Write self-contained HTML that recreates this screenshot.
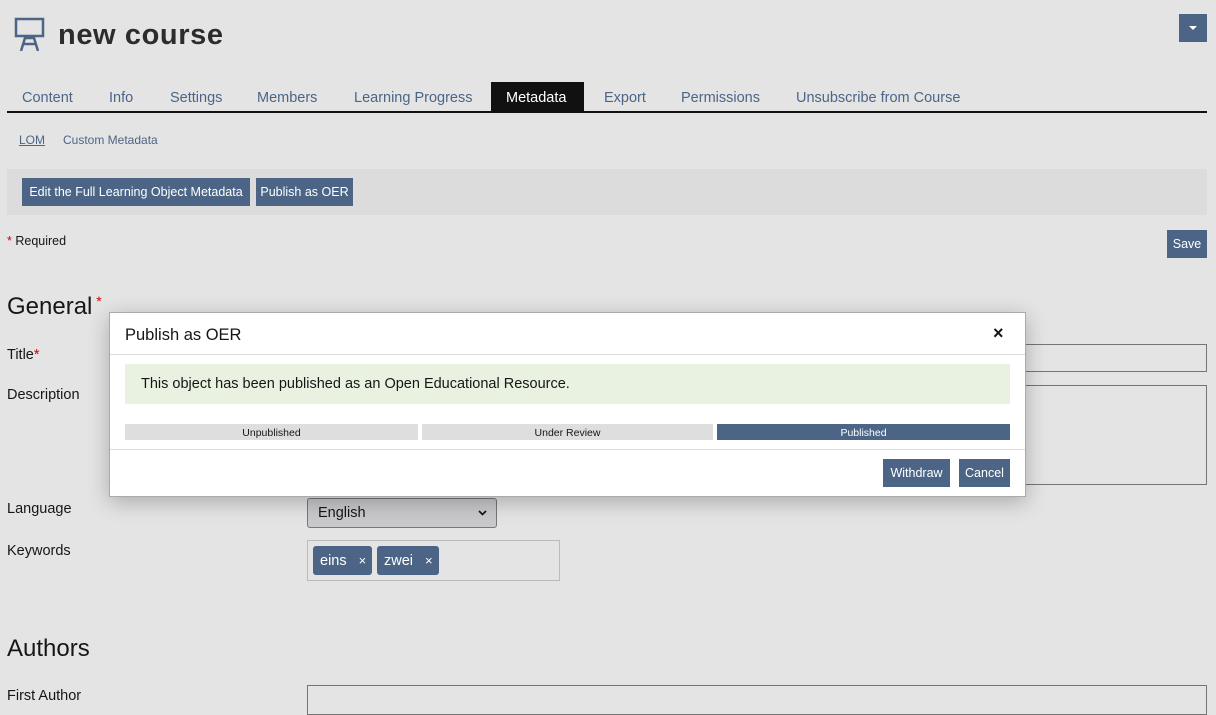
<!DOCTYPE html>
<html><head><meta charset="utf-8"><style>
*{box-sizing:border-box;margin:0;padding:0}
body{width:1216px;height:704px;overflow:hidden;background:#e4e4e4;font-family:"Liberation Sans",sans-serif;color:#161616;position:relative}
.a{position:absolute}
.btn{position:absolute;background:#4c6586;color:#fff;font-size:12.5px;display:flex;align-items:center;justify-content:center}
.tab{position:absolute;top:82px;height:29px;line-height:33px;font-size:14.5px;color:#4c6586;padding:0 15px}
.lbl{position:absolute;left:7px;font-size:14.5px;color:#161616}
.inp{position:absolute;border:1px solid #757575;background:#e4e4e4}
</style></head><body>
<svg class="a" style="left:14px;top:17px" width="32" height="34" viewBox="0 0 32 34" fill="none" stroke="#4c6586" stroke-width="2.5"><rect x="2" y="2" width="27" height="17"/><path d="M7 34 L11 21 L20 21 L24 34 M9 27 H22"/></svg>
<div class="a" style="left:58px;top:19px;font-size:29px;font-weight:bold;color:#2c2c2c;letter-spacing:0.6px">new course</div>
<div class="btn" style="left:1179px;top:14px;width:28px;height:28px"><svg width="10" height="6"><path d="M1 1h8l-4 4z" fill="#fff"/></svg></div>
<div class="tab" style="left:7px">Content</div>
<div class="tab" style="left:94px">Info</div>
<div class="tab" style="left:155px">Settings</div>
<div class="tab" style="left:242px">Members</div>
<div class="tab" style="left:339px">Learning Progress</div>
<div class="tab" style="left:491px;width:93px;background:#111;color:#fff">Metadata</div>
<div class="tab" style="left:589px">Export</div>
<div class="tab" style="left:666px">Permissions</div>
<div class="tab" style="left:781px">Unsubscribe from Course</div>
<div class="a" style="left:7px;top:111px;width:1200px;height:2px;background:#111"></div>
<div class="a" style="left:19px;top:133px;font-size:12px;color:#4c6586;text-decoration:underline">LOM</div>
<div class="a" style="left:63px;top:133px;font-size:12px;color:#4c6586">Custom Metadata</div>
<div class="a" style="left:7px;top:169px;width:1200px;height:46px;background:#dcdcdc"></div>
<div class="btn" style="left:22px;top:178px;width:228px;height:28px">Edit the Full Learning Object Metadata</div>
<div class="btn" style="left:256px;top:178px;width:97px;height:28px">Publish as OER</div>
<div class="a" style="left:7px;top:234px;font-size:12.5px"><span style="color:#c00">*</span> Required</div>
<div class="btn" style="left:1167px;top:230px;width:40px;height:28px">Save</div>
<div class="a" style="left:7px;top:293px;font-size:24px">General<span style="color:#c00;font-size:14px;vertical-align:top"> *</span></div>
<div class="lbl" style="top:347px">Title<span style="color:#c00">*</span></div>
<div class="lbl" style="top:387px">Description</div>
<div class="inp" style="left:1020px;top:344px;width:187px;height:28px"></div>
<div class="inp" style="left:1020px;top:385px;width:187px;height:100px"></div>
<div class="lbl" style="top:501px">Language</div>
<div class="a" style="left:307px;top:498px;width:190px;height:30px;border:1px solid #777;border-radius:3px;background:#c9c9cc;font-size:14.5px;padding:6px 10px">English<svg style="position:absolute;right:9px;top:11px" width="9" height="6"><path d="M1 1l3.5 3.5L8 1" stroke="#111" stroke-width="1.6" fill="none"/></svg></div>
<div class="lbl" style="top:543px">Keywords</div>
<div class="a" style="left:307px;top:540px;width:253px;height:41px;border:1px solid #bbb"></div>
<div class="btn" style="left:313px;top:546px;width:59px;height:29px;border-radius:3px;font-size:14.5px;justify-content:flex-start;padding-left:7px">eins<span style="margin-left:12px;font-size:13px">×</span></div>
<div class="btn" style="left:377px;top:546px;width:62px;height:29px;border-radius:3px;font-size:14.5px;justify-content:flex-start;padding-left:7px">zwei<span style="margin-left:12px;font-size:13px">×</span></div>
<div class="a" style="left:7px;top:635px;font-size:24px">Authors</div>
<div class="lbl" style="top:688px">First Author</div>
<div class="inp" style="left:307px;top:685px;width:900px;height:30px"></div>

<div class="a" style="left:109px;top:312px;width:917px;height:185px;background:#fff;border:1px solid #aaa;box-shadow:0 5px 20px rgba(0,0,0,.25)">
<div class="a" style="left:15px;top:13px;font-size:16.5px">Publish as OER</div>
<div class="a" style="left:883px;top:10px;font-size:18px;font-weight:bold">×</div>
<div class="a" style="left:0;top:41px;width:915px;height:1px;background:#ddd"></div>
<div class="a" style="left:15px;top:51px;width:885px;height:40px;background:#e9f2e1;font-size:14.5px;padding:12px 16px">This object has been published as an Open Educational Resource.</div>
<div class="a" style="left:15px;top:111px;width:293px;height:16px;background:#dedede;font-size:10.5px;text-align:center;line-height:18px">Unpublished</div>
<div class="a" style="left:312px;top:111px;width:291px;height:16px;background:#dedede;font-size:10.5px;text-align:center;line-height:18px">Under Review</div>
<div class="a" style="left:607px;top:111px;width:293px;height:16px;background:#4c6586;color:#fff;font-size:10.5px;text-align:center;line-height:18px">Published</div>
<div class="a" style="left:0;top:136px;width:915px;height:1px;background:#ddd"></div>
<div class="btn" style="left:773px;top:146px;width:67px;height:28px">Withdraw</div>
<div class="btn" style="left:849px;top:146px;width:51px;height:28px">Cancel</div>
</div>
</body></html>
